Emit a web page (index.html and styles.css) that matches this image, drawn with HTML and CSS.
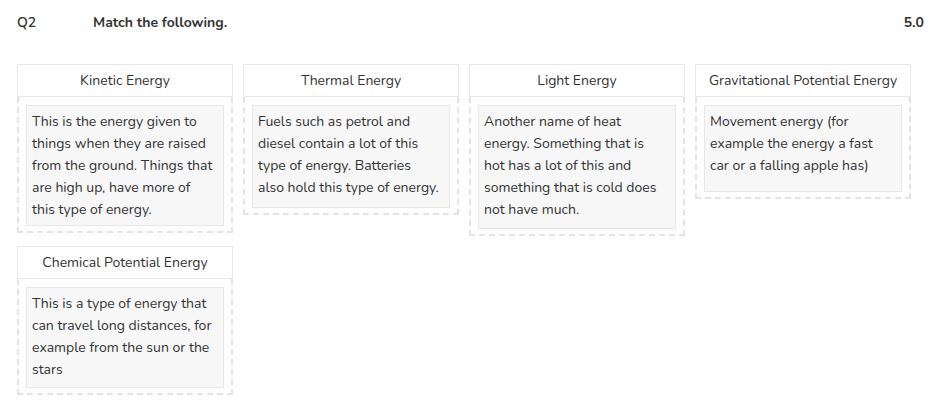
FILE: index.html
```html
<!DOCTYPE html>
<html>
<head>
<meta charset="utf-8">
<link rel="stylesheet" href="styles.css">
</head>
<body>
<div class="page">
  <div class="qhead">
    <span class="qnum">Q2</span>
    <span class="qtitle">Match the following.</span>
    <span class="qmarks">5.0</span>
  </div>
  <div class="grid">
    <div class="card">
      <div class="card-head">Kinetic Energy</div>
      <div class="drop">
        <div class="item lines-5">This is the energy given to things when they are raised from the ground. Things that are high up, have more of this type of energy.</div>
      </div>
    </div>
    <div class="card">
      <div class="card-head">Thermal Energy</div>
      <div class="drop">
        <div class="item lines-4 tall">Fuels such as petrol and diesel contain a lot of this type of energy. Batteries also hold this type of energy.</div>
      </div>
    </div>
    <div class="card">
      <div class="card-head">Light Energy</div>
      <div class="drop">
        <div class="item lines-5 extra">Another name of heat energy. Something that is hot has a lot of this and something that is cold does not have much.</div>
      </div>
    </div>
    <div class="card">
      <div class="card-head">Gravitational Potential Energy</div>
      <div class="drop">
        <div class="item lines-3">Movement energy (for example the energy a fast car or a falling apple has)</div>
      </div>
    </div>
    <div class="card">
      <div class="card-head">Chemical Potential Energy</div>
      <div class="drop">
        <div class="item lines-4">This is a type of energy that can travel long distances, for example from the sun or the stars</div>
      </div>
    </div>
  </div>
</div>
</body>
</html>
```

FILE: styles.css
```css
* { box-sizing: border-box; }
body {
  margin: 0;
  background: #fff;
  font-family: "Nunito", "Lato", "Open Sans", sans-serif;
  color: #333;
}
.page {
  padding: 12px 22px 0 17px;
}
.qhead {
  display: flex;
  align-items: center;
  height: 20px;
  font-size: 14px;
}
.qnum {
  width: 76px;
  font-weight: 600;
}
.qtitle {
  font-weight: 700;
  flex: 1;
}
.qmarks {
  font-weight: 700;
}
.grid {
  display: grid;
  grid-template-columns: repeat(4, 216px);
  column-gap: 10px;
  row-gap: 10px;
  align-items: start;
  margin-top: 32px;
}
.card-head {
  height: 33px;
  border: 1px solid #e8e8e8;
  display: flex;
  align-items: center;
  justify-content: center;
  font-size: 14px;
  color: #333;
}
.drop {
  border: 2px dashed #e4e4e4;
  border-top: none;
  padding: 8px 7px 5px 7px;
}
.item {
  background: #f7f7f7;
  border: 1px solid #e8e8e8;
  padding: 5px 9.5px 4px 5px;
  font-size: 14px;
  line-height: 22px;
  color: #333;
}
.lines-3 { min-height: 87px; }
.lines-4 { min-height: 101px; }
.lines-4.tall { min-height: 103px; }
.lines-5 { min-height: 121px; }
.lines-5.extra { min-height: 124px; }
```
